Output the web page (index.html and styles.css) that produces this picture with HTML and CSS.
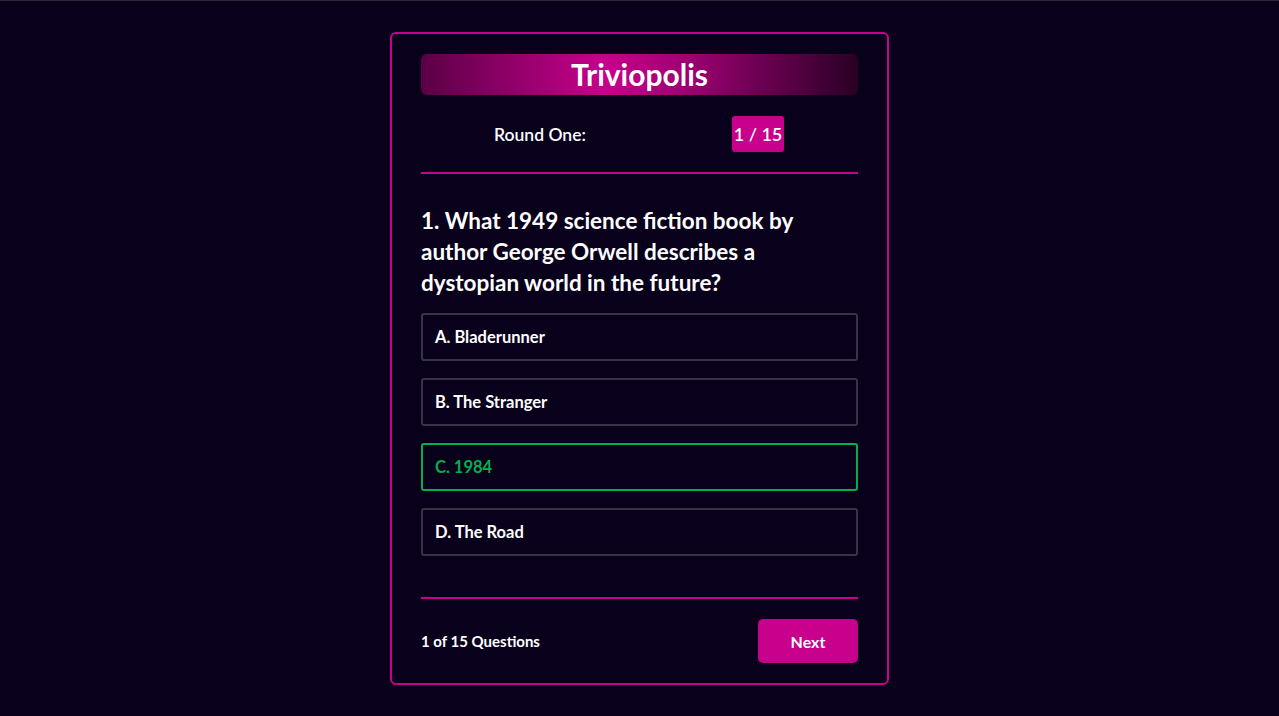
FILE: index.html
```html
<!DOCTYPE html>
<html>
<head>
<meta charset="utf-8">
<link rel="stylesheet" href="styles.css">
</head>
<body>
<div class="card">
  <div class="header"><h1 class="title">Triviopolis</h1></div>
  <div class="round">
    <span class="round-label">Round One:</span>
    <span class="badge">1 / 15</span>
  </div>
  <div class="divider"></div>
  <h2 class="question">1. What 1949 science fiction book by author George Orwell describes a dystopian world in the future?</h2>
  <div class="options">
    <div class="option">A. Bladerunner</div>
    <div class="option">B. The Stranger</div>
    <div class="option correct">C. 1984</div>
    <div class="option">D. The Road</div>
  </div>
  <div class="divider divider-bottom"></div>
  <div class="footer">
    <span class="count">1 of 15 Questions</span>
    <button class="next">Next</button>
  </div>
</div>
</body>
</html>
```
FILE: styles.css
```css
* { box-sizing: border-box; }
html, body { margin: 0; padding: 0; }
html { background: #09001b; }
body {
  font-family: "Lato", "Noto Sans", sans-serif;
  color: #ffffff;
  display: flex;
  justify-content: center;
  align-items: flex-start;
  padding-top: 32px;
  box-shadow: inset 0 1px 0 #2a2a38;
}
.card {
  width: 499px;
  border: 2px solid #c8008c;
  border-radius: 6px;
  padding: 20px 29px 20px 29px;
}
.header {
  height: 41px;
  border-radius: 6px;
  background: linear-gradient(90deg, #5a0046 0%, #c8008c 42%, #a00074 60%, #2a0026 100%);
  display: flex;
  align-items: center;
  justify-content: center;
}
.title {
  margin: 0;
  font-size: 30px;
  font-weight: 700;
  line-height: 41px;
}
.round {
  margin-top: 21px;
  height: 36px;
  display: flex;
  align-items: center;
  padding-left: 73px;
}
.round-label {
  font-size: 17.5px;
  font-weight: 600;
  width: 238px;
}
.badge {
  background: #c8008c;
  border-radius: 3px;
  height: 36px;
  width: 52px;
  display: flex;
  align-items: center;
  justify-content: center;
  font-size: 18px;
  font-weight: 600;
}
.divider {
  margin-top: 20px;
  height: 2px;
  background: #c8008c;
}
.question {
  margin: 31px 0 0 0;
  font-size: 22.5px;
  font-weight: 700;
  line-height: 31px;
}
.options {
  margin-top: 15px;
  display: flex;
  flex-direction: column;
  gap: 17px;
}
.option {
  height: 48px;
  border: 2px solid #3a3348;
  border-radius: 3px;
  padding-left: 12px;
  display: flex;
  align-items: center;
  font-size: 16.5px;
  font-weight: 700;
}
.option.correct {
  border-color: #00b04f;
  color: #00b04f;
}
.divider-bottom {
  margin-top: 41px;
}
.footer {
  margin-top: 20px;
  display: flex;
  align-items: center;
  justify-content: space-between;
}
.count {
  font-size: 15px;
  font-weight: 700;
}
.next {
  width: 100px;
  height: 44px;
  background: #c8008c;
  border: none;
  border-radius: 5px;
  color: #ffffff;
  font-family: inherit;
  font-size: 16px;
  font-weight: 700;
}
```
